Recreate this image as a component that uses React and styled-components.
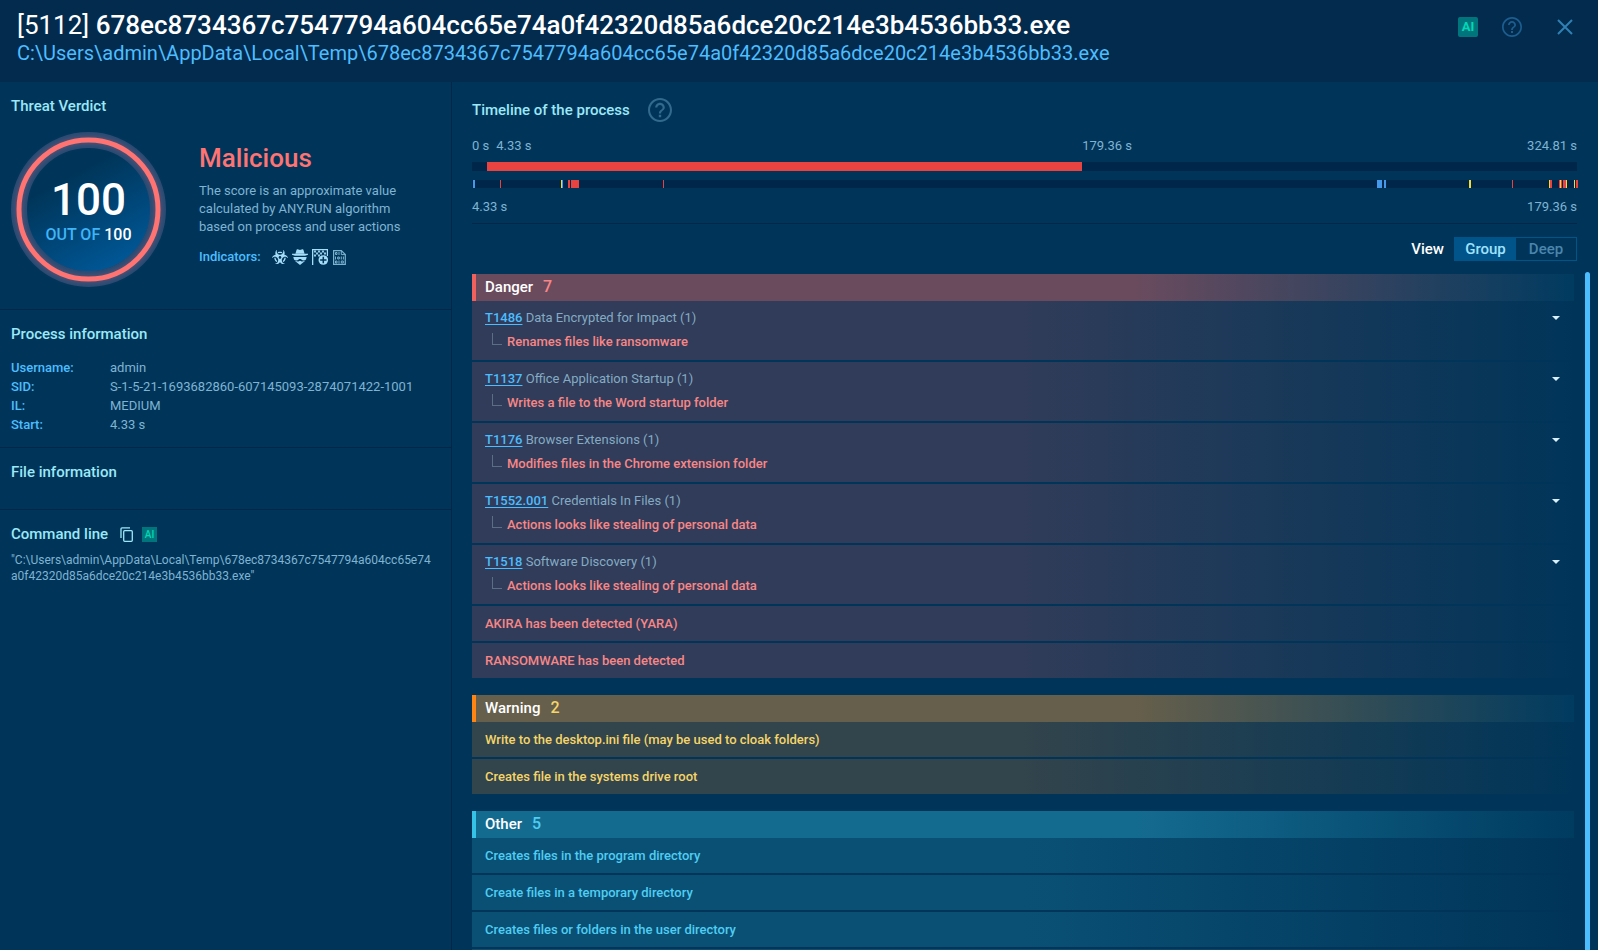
import React from 'react';
import styled, { createGlobalStyle } from 'styled-components';
import { FaBiohazard } from 'react-icons/fa';

const GlobalStyle = createGlobalStyle`
  * {
    box-sizing: border-box;
  }

  body {
    margin: 0;
    background: #003559;
    color: #7fb3d3;
    font-family: Roboto, 'Liberation Sans', sans-serif;
    font-size: 13px;
    line-height: 18px;
  }

  h1, h2, h3, p, dl, dd, ul {
    margin: 0;
    padding: 0;
  }

  button {
    padding: 0;
    border: 0;
    background: none;
    color: inherit;
    font-family: inherit;
    cursor: pointer;
  }
`;

const Page = styled.div`
  display: flex;
  flex-direction: column;
  height: 100vh;
  overflow: hidden;
`;

const Header = styled.header`
  display: flex;
  justify-content: space-between;
  flex-shrink: 0;
  padding: 10px 25px 16px 17px;
  background: #032b4e;
`;

const Title = styled.h1`
  color: #fff;
  font-size: 26px;
  font-weight: 500;
  line-height: 30px;
`;

const Pid = styled.span`
  font-weight: 400;
`;

const Path = styled.p`
  color: #4cbdff;
  font-size: 20px;
  line-height: 26px;
`;

const HeaderActions = styled.div`
  display: flex;
  align-items: center;
  height: 34px;
`;

const IconButton = styled.button`
  display: flex;
  color: ${(props) => props.$color};
  margin-left: ${(props) => props.$gap || 0}px;
`;

const AiButton = styled.button`
  width: ${(props) => props.$size}px;
  height: ${(props) => props.$size}px;
  border-radius: ${(props) => (props.$size > 16 ? 2 : 0)}px;
  background: #00767c;
  color: #00d8b8;
  font-size: ${(props) => (props.$size > 16 ? 13 : 10)}px;
  font-weight: ${(props) => (props.$size > 16 ? 700 : 500)};
  line-height: ${(props) => props.$size}px;
`;

const Body = styled.div`
  display: flex;
  flex: 1;
  min-height: 0;
`;

const Sidebar = styled.aside`
  flex: 0 0 452px;
  border-right: 1px solid #00264a;
`;

const Section = styled.section`
  padding: 14px 11px ${(props) => props.$bottom}px;
  border-bottom: ${(props) => (props.$last ? '0' : '1px solid #00264a')};
`;

const SectionTitle = styled.h2`
  color: #9be8f8;
  font-size: 15px;
  font-weight: 500;
  line-height: 20px;
`;

const Verdict = styled.div`
  display: flex;
  gap: 33px;
  margin-top: 16px;
`;

const Score = styled.div`
  display: grid;
  flex-shrink: 0;

  > * {
    grid-area: 1 / 1;
  }
`;

const ScoreText = styled.div`
  display: flex;
  flex-direction: column;
  align-items: center;
  padding-top: 45px;
  z-index: 1;
`;

const ScoreValue = styled.strong`
  color: #fff;
  font-size: 44px;
  font-weight: 500;
  line-height: 46px;
`;

const ScoreTotal = styled.span`
  margin-top: 2px;
  color: #3fb4f7;
  font-size: 16px;
  font-weight: 500;
  line-height: 20px;

  b {
    color: #fff;
    font-weight: 500;
  }
`;

const VerdictInfo = styled.div`
  padding-top: 10px;
`;

const VerdictName = styled.h3`
  margin-bottom: 8px;
  color: #ff7373;
  font-size: 26px;
  font-weight: 500;
  line-height: 32px;
`;

const VerdictText = styled.p`
  max-width: 210px;
`;

const Indicators = styled.div`
  display: flex;
  align-items: center;
  gap: 4px;
  margin-top: 12px;
  color: #a5dcf8;
`;

const IndicatorsLabel = styled.span`
  margin-right: 7px;
  color: #4cbdff;
  font-weight: 500;
`;

const Info = styled.dl`
  display: grid;
  grid-template-columns: 99px 1fr;
  row-gap: 1px;
  margin-top: 15px;

  dt {
    color: #4cbdff;
    font-weight: 500;
  }
`;

const CommandTitle = styled.div`
  display: flex;
  align-items: center;
  gap: 8px;
`;

const CommandLine = styled.p`
  margin-top: 8px;
  padding-right: 8px;
  font-size: 12px;
  line-height: 16px;
  word-break: break-all;
`;

const Main = styled.main`
  display: flex;
  flex-direction: column;
  flex: 1;
  min-width: 0;
  padding-left: 20px;
`;

const Timeline = styled.section`
  margin-right: 21px;
  padding: 16px 0 7px;
  border-bottom: 1px solid #00264a;
`;

const TimelineTitle = styled.div`
  display: flex;
  align-items: center;
  gap: 18px;
  margin-bottom: 15px;
`;

const TimeLabels = styled.div`
  display: grid;
  grid-template-columns: ${(props) => props.$split || 'auto'} auto;
  margin-bottom: 7px;
`;

const TimeGroup = styled.div`
  display: flex;
  justify-content: ${(props) => (props.$spread ? 'space-between' : 'flex-start')};
  gap: 7px;
`;

const Track = styled.div`
  position: relative;
  height: ${(props) => props.$height}px;
  margin-bottom: ${(props) => props.$below}px;
  background: #002649;
`;

const Span = styled.div`
  height: 100%;
  background: #e84340;
`;

const Mark = styled.span`
  position: absolute;
  top: 0;
  height: 100%;
  background: ${(props) => props.$color};
`;

const ViewRow = styled.div`
  display: flex;
  align-items: center;
  justify-content: flex-end;
  gap: 10px;
  margin: 13px 21px 11px 0;
  color: #fff;
  font-size: 15px;
  font-weight: 500;
`;

const Switch = styled.div`
  display: flex;
  border: 1px solid #00548a;
`;

const SwitchButton = styled.button`
  width: ${(props) => (props.$active ? 61 : 60)}px;
  height: 22px;
  background: ${(props) => (props.$active ? '#00548a' : 'transparent')};
  color: ${(props) => (props.$active ? '#a0e2fc' : '#4b85ad')};
  font-size: 15px;
  font-weight: 500;
`;

const Results = styled.div`
  display: flex;
  flex: 1;
  gap: 11px;
  min-height: 0;
  margin-right: 8px;
`;

const Groups = styled.div`
  display: flex;
  flex-direction: column;
  flex: 1;
  gap: 17px;
  padding-top: 2px;
  overflow: hidden;
`;

const ScrollThumb = styled.div`
  width: 5px;
  border-radius: 3px 3px 0 0;
  background: #4cbdff;
`;

const Group = styled.section`
  flex-shrink: 0;
`;

const GroupTitle = styled.h2`
  display: flex;
  align-items: center;
  gap: 10px;
  height: 27px;
  padding: 0 0 2px 9px;
  border-left: 4px solid ${(props) => props.$tone.edge};
  background: linear-gradient(90deg, ${(props) => props.$tone.head} 60%, #003b60);
  color: #fff;
  font-size: 15px;
  font-weight: 500;
`;

const Count = styled.span`
  color: ${(props) => props.$tone.text};
  font-size: 16px;
`;

const Rows = styled.ul`
  display: flex;
  flex-direction: column;
  gap: 2px;
  list-style: none;
`;

const Row = styled.li`
  display: flex;
  align-items: flex-start;
  justify-content: space-between;
  min-height: ${(props) => (props.$tall ? 59 : 35)}px;
  padding: ${(props) => (props.$tall ? 8 : 9)}px 13px 8px;
  background: linear-gradient(90deg, ${(props) => props.$tone.row} 50%, #003559);
  color: ${(props) => props.$tone.text};
  font-weight: 500;
`;

const Technique = styled.p`
  color: #84abc3;
  font-weight: 400;
`;

const TechniqueLink = styled.a`
  color: #4cbdff;
  font-weight: 500;
  text-underline-offset: 2px;
`;

const Detail = styled.p`
  display: flex;
  gap: 5px;
  margin-top: 6px;
  padding-left: 7px;
`;

const Branch = styled.span`
  width: 10px;
  height: 12px;
  border: solid #5c6d86;
  border-width: 0 0 1px 1px;
`;

const Expand = styled.button`
  padding: 7px 1px;
  line-height: 0;
`;

const HelpIcon = ({ size }) => (
  <svg width={size} height={size} viewBox="0 0 20 20" fill="currentColor">
    <path d="M9 16h2v-2H9v2zm1-16C4.48 0 0 4.48 0 10s4.48 10 10 10 10-4.48 10-10S15.52 0 10 0zm0 18.3c-4.5 0-8.3-3.8-8.3-8.3S5.500 1.700 10 1.700s8.300 3.800 8.300 8.300-3.800 8.300-8.300 8.300zM10 4C7.790 4 6 5.790 6 8h1.800c0-1.200 1-2.200 2.200-2.200s2.200 1 2.200 2.200c0 2-3.100 1.800-3.100 5h1.800c0-2.250 3.100-2.500 3.100-5 0-2.210-1.790-4-4-4z" />
  </svg>
);

const CloseIcon = () => (
  <svg width="16" height="16" viewBox="0 0 16 16" stroke="currentColor" strokeWidth="2">
    <path d="M1 1l14 14M15 1L1 15" />
  </svg>
);

const CopyIcon = () => (
  <svg width="14" height="15" viewBox="0 0 14 15" fill="none" stroke="currentColor" strokeWidth="1.3">
    <rect x="3.700" y="3.700" width="8.600" height="10.600" rx="1" />
    <path d="M1 11V1.700Q1 0.800 2 0.800H10" />
  </svg>
);

const SpyIcon = () => (
  <svg width="16" height="16" viewBox="0 0 16 16" fill="currentColor">
    <path d="M3.400 4.800L4.600.8q.2-.8 1-.6L8 1l2.400-.8q.8-.2 1 .6l1.200 4z" />
    <path d="M0 4.800h16v1l-3 1H3l-3-1z" />
    <path d="M1.300 8h13.400l-.7 2.500q-.8 1-2.600.9-1.900-.2-2.400-1.500H7q-.5 1.300-2.400 1.500-1.800.1-2.600-.9z" />
    <path d="M3 12l3.200.5L8 11.700l1.800.8L13 12l-5 4z" />
  </svg>
);

const FlagIcon = () => (
  <svg width="17" height="16" viewBox="0 0 17 16" fill="currentColor">
    <path d="M0 0h1.300v16H0zM1 0h15v1.200H1zM14.800 0H16v7h-1.200z" />
    <path
      d="M2 1.500h2v2h2v-2h2v2h2v-2h2v2h2v2h-2v-2h-2v2H8v-2H6v2H4v-2H2zM2 5.500h2v2H2zM6 5.500h2v2H6z"
      opacity="0.900"
    />
    <circle cx="11.300" cy="11" r="4.800" />
    <path d="M11.300 7.800v6.400M8.100 11h6.400" stroke="#003559" strokeWidth="1.500" />
  </svg>
);

const BinaryFileIcon = () => (
  <svg width="13" height="15" viewBox="0 0 13 15" fill="none" stroke="currentColor" opacity="0.75">
    <path d="M.6.600h7.700l4 4v9.800H.6z" strokeWidth="1.200" />
    <path d="M8.300.600v4h4" />
    <path d="M2.500 2.500h1.500v2h-1.500zM6 2v3M2.500 6.500v3M4.700 7h1.600v2h-1.600zM8.300 6.500v3M10.400 6.500v3M2.500 11h1.500v2h-1.500zM6 10.500v3M8.300 11h2v2h-2z" />
  </svg>
);

const ScoreRing = () => (
  <svg width="155" height="155" viewBox="0 0 155 155" aria-hidden="true">
    <defs>
      <linearGradient id="disc" x1="0.3" y1="0.1" x2="0.75" y2="0.95">
        <stop offset="0.15" stopColor="#003559" />
        <stop offset="1" stopColor="#005796" />
      </linearGradient>
      <filter id="glow" x="-20%" y="-20%" width="140%" height="140%">
        <feGaussianBlur stdDeviation="3" />
      </filter>
    </defs>
    <circle cx="77.5" cy="77.5" r="62" fill="url(#disc)" />
    <circle cx="77.5" cy="77.5" r="69.5" fill="none" stroke="#264a73" strokeWidth="16" />
    <circle cx="77.5" cy="77.5" r="69.5" fill="none" stroke="#ff7373" strokeWidth="5" filter="url(#glow)" opacity="0.350" />
    <circle cx="77.5" cy="77.5" r="69.5" fill="none" stroke="#ff7373" strokeWidth="5" />
  </svg>
);

const FILE_NAME = '678ec8734367c7547794a604cc65e74a0f42320d85a6dce20c214e3b4536bb33.exe';
const FILE_PATH = `C:\\Users\\admin\\AppData\\Local\\Temp\\${FILE_NAME}`;

const TOTAL = 324.81;
const START = 4.33;
const END = 179.36;

const RED = '#e84340';
const BLUE = '#4499ec';
const YELLOW = '#f0dc40';

// [position in track units, width, color]
const TRACK_UNITS = 1105;
const marks = [
  [1, 2, BLUE],
  [28, 1, RED],
  [89, 1, YELLOW],
  [90, 1, BLUE],
  [96, 2, RED],
  [99, 8, RED],
  [191, 1, RED],
  [905, 5, BLUE],
  [912, 2, BLUE],
  [997, 2, YELLOW],
  [1040, 1, RED],
  [1077, 1, YELLOW],
  [1078, 2, RED],
  [1087, 1, RED],
  [1088, 1, YELLOW],
  [1089, 1, RED],
  [1091, 3, RED],
  [1094, 1, YELLOW],
  [1102, 1, YELLOW],
  [1104, 2, RED],
];

const info = [
  ['Username:', 'admin'],
  ['SID:', 'S-1-5-21-1693682860-607145093-2874071422-1001'],
  ['IL:', 'MEDIUM'],
  ['Start:', '4.33 s'],
];

const groups = [
  {
    name: 'Danger',
    count: 7,
    tone: { edge: '#f0605c', head: '#6a4b5e', row: '#303c59', text: '#f98686' },
    rows: [
      { id: 'T1486', technique: 'Data Encrypted for Impact (1)', text: 'Renames files like ransomware' },
      { id: 'T1137', technique: 'Office Application Startup (1)', text: 'Writes a file to the Word startup folder' },
      { id: 'T1176', technique: 'Browser Extensions (1)', text: 'Modifies files in the Chrome extension folder' },
      { id: 'T1552.001', technique: 'Credentials In Files (1)', text: 'Actions looks like stealing of personal data' },
      { id: 'T1518', technique: 'Software Discovery (1)', text: 'Actions looks like stealing of personal data' },
      { text: 'AKIRA has been detected (YARA)' },
      { text: 'RANSOMWARE has been detected' },
    ],
  },
  {
    name: 'Warning',
    count: 2,
    tone: { edge: '#ff8412', head: '#665f4b', row: '#32444c', text: '#f5d568' },
    rows: [
      { text: 'Write to the desktop.ini file (may be used to cloak folders)' },
      { text: 'Creates file in the systems drive root' },
    ],
  },
  {
    name: 'Other',
    count: 5,
    tone: { edge: '#35c3e8', head: '#146b90', row: '#0a5075', text: '#4fcdf2' },
    rows: [
      { text: 'Creates files in the program directory' },
      { text: 'Create files in a temporary directory' },
      { text: 'Creates files or folders in the user directory' },
      { text: '' },
    ],
  },
];

const ResultRow = ({ row, tone }) => {
  if (!row.id) {
    return <Row $tone={tone}>{row.text}</Row>;
  }
  return (
    <Row $tone={tone} $tall>
      <div>
        <Technique>
          <TechniqueLink href={`#${row.id}`}>{row.id}</TechniqueLink> {row.technique}
        </Technique>
        <Detail>
          <Branch />
          {row.text}
        </Detail>
      </div>
      <Expand aria-label={`Expand ${row.id}`}>
        <svg width="8" height="4" viewBox="0 0 8 4" fill="#d9f1ff">
          <path d="M0 0h8L4 4z" />
        </svg>
      </Expand>
    </Row>
  );
};

const App = () => {
  return (
    <Page>
      <GlobalStyle />
      <Header>
        <div>
          <Title>
            <Pid>[5112]</Pid> {FILE_NAME}
          </Title>
          <Path>{FILE_PATH}</Path>
        </div>
        <HeaderActions>
          <AiButton $size={20}>AI</AiButton>
          <IconButton $color="#1b5e8f" $gap={24} aria-label="Help">
            <HelpIcon size={20} />
          </IconButton>
          <IconButton $color="#2f80b5" $gap={35} aria-label="Close">
            <CloseIcon />
          </IconButton>
        </HeaderActions>
      </Header>
      <Body>
        <Sidebar>
          <Section $bottom={22}>
            <SectionTitle>Threat Verdict</SectionTitle>
            <Verdict>
              <Score>
                <ScoreRing />
                <ScoreText>
                  <ScoreValue>100</ScoreValue>
                  <ScoreTotal>
                    OUT OF <b>100</b>
                  </ScoreTotal>
                </ScoreText>
              </Score>
              <VerdictInfo>
                <VerdictName>Malicious</VerdictName>
                <VerdictText>
                  The score is an approximate value calculated by ANY.RUN algorithm based on process and user actions
                </VerdictText>
                <Indicators>
                  <IndicatorsLabel>Indicators:</IndicatorsLabel>
                  <FaBiohazard size={16} />
                  <SpyIcon />
                  <FlagIcon />
                  <BinaryFileIcon />
                </Indicators>
              </VerdictInfo>
            </Verdict>
          </Section>
          <Section $bottom={13}>
            <SectionTitle>Process information</SectionTitle>
            <Info>
              {info.map(([label, value]) => (
                <React.Fragment key={label}>
                  <dt>{label}</dt>
                  <dd>{value}</dd>
                </React.Fragment>
              ))}
            </Info>
          </Section>
          <Section $bottom={27}>
            <SectionTitle>File information</SectionTitle>
          </Section>
          <Section $bottom={15} $last>
            <CommandTitle>
              <SectionTitle>Command line</SectionTitle>
              <IconButton $color="#9be8f8" $gap={4} aria-label="Copy">
                <CopyIcon />
              </IconButton>
              <AiButton $size={15}>AI</AiButton>
            </CommandTitle>
            <CommandLine>{`"${FILE_PATH}"`}</CommandLine>
          </Section>
        </Sidebar>
        <Main>
          <Timeline>
            <TimelineTitle>
              <SectionTitle>Timeline of the process</SectionTitle>
              <IconButton $color="#326a8d" aria-label="About the timeline">
                <HelpIcon size={24} />
              </IconButton>
            </TimelineTitle>
            <TimeLabels $split={`${(END / TOTAL) * 100}%`}>
              <TimeGroup>
                <span>0 s</span>
                <span>4.33 s</span>
              </TimeGroup>
              <TimeGroup $spread>
                <span>179.36 s</span>
                <span>324.81 s</span>
              </TimeGroup>
            </TimeLabels>
            <Track $height={9} $below={9}>
              <Span
                style={{
                  marginLeft: `${(START / TOTAL) * 100}%`,
                  width: `${((END - START) / TOTAL) * 100}%`,
                }}
              />
            </Track>
            <Track $height={8} $below={10}>
              {marks.map(([at, width, color]) => (
                <Mark key={at} $color={color} style={{ left: `${(at / TRACK_UNITS) * 100}%`, width }} />
              ))}
            </Track>
            <TimeGroup $spread>
              <span>4.33 s</span>
              <span>179.36 s</span>
            </TimeGroup>
          </Timeline>
          <ViewRow>
            View
            <Switch>
              <SwitchButton $active>Group</SwitchButton>
              <SwitchButton>Deep</SwitchButton>
            </Switch>
          </ViewRow>
          <Results>
            <Groups>
              {groups.map((group) => (
                <Group key={group.name}>
                  <GroupTitle $tone={group.tone}>
                    {group.name} <Count $tone={group.tone}>{group.count}</Count>
                  </GroupTitle>
                  <Rows>
                    {group.rows.map((row, i) => (
                      <ResultRow key={i} row={row} tone={group.tone} />
                    ))}
                  </Rows>
                </Group>
              ))}
            </Groups>
            <ScrollThumb />
          </Results>
        </Main>
      </Body>
    </Page>
  );
};

export default App;
